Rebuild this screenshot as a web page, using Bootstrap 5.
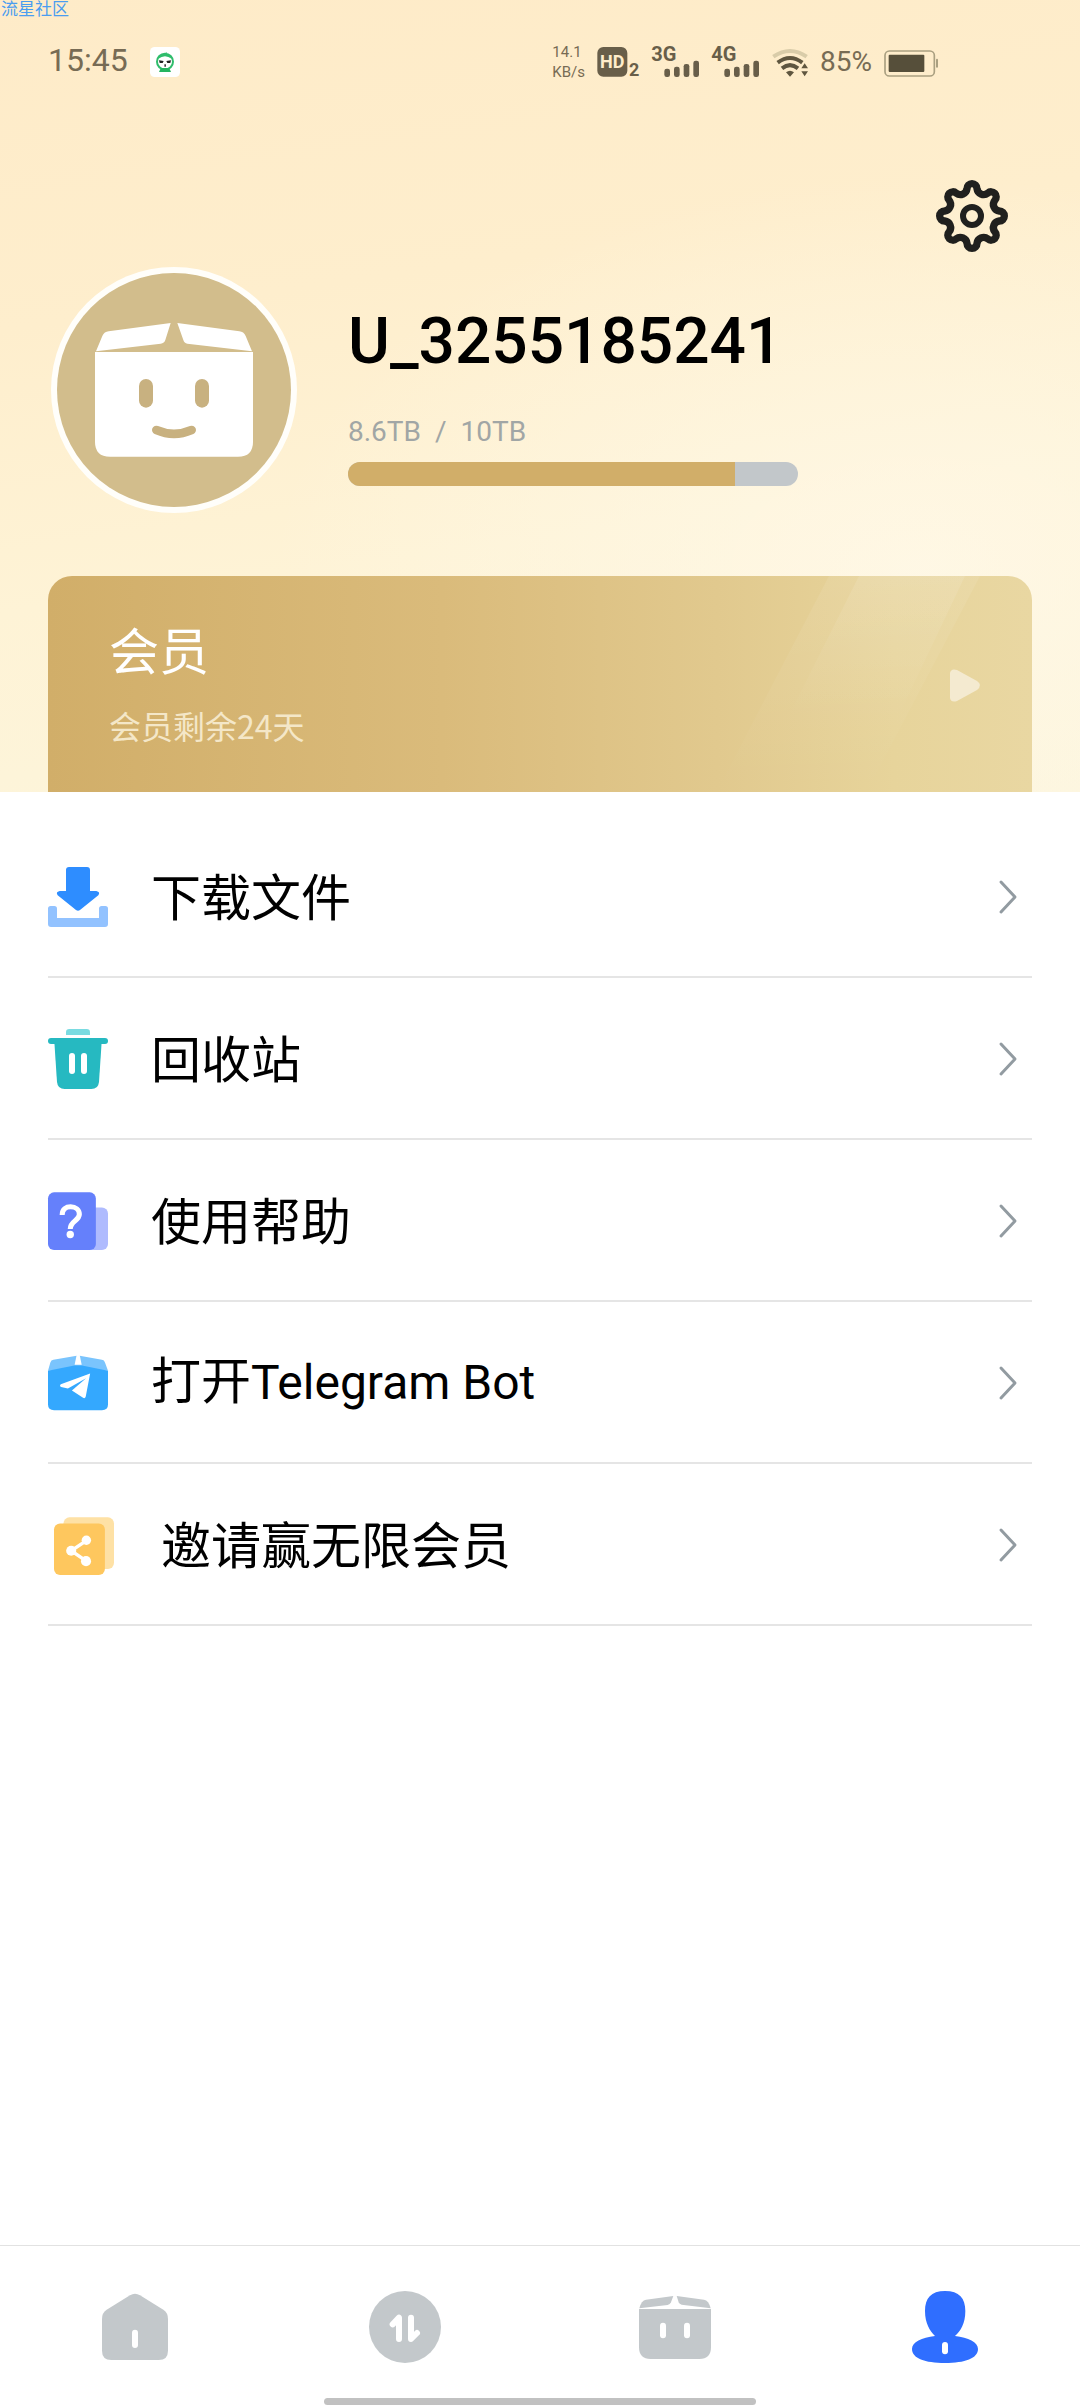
<!DOCTYPE html>
<html lang="zh-CN">
<head>
<meta charset="utf-8">
<meta name="viewport" content="width=device-width, initial-scale=1">
<title>我的</title>
<link href="https://cdn.jsdelivr.net/npm/bootstrap@5.3.0/dist/css/bootstrap.min.css" rel="stylesheet">
<style>
body{font-family:"Noto Sans CJK SC",sans-serif;color:#000;background:#fff}
svg{display:block;flex:none;overflow:visible}
.latin{font-family:Roboto,"Liberation Sans",sans-serif}
.watermark{top:0;left:1px;font-size:17px;line-height:16px;color:#4a9df0}
.hero{background:
  radial-gradient(ellipse 60% 50% at 85% 72%,rgba(255,249,234,.7),rgba(255,249,234,0)),
  linear-gradient(172deg,#feebc8 0,#feeecd 35%,#fef3d6 65%,#fcf5dc 100%)}
.statusbar{height:120px;padding:4px 142px 0 48px;color:#776b54}
.clock{font-size:32px;line-height:40px;margin-top:-4px}
.app-icon{margin-left:22px}
.speed{font-size:15px;line-height:20px}
.battery-text{font-size:28px;line-height:32px}
.status-gap{gap:12px}
.settings-row{padding:60px 72px 0}
.profile{gap:51px;padding:15px 51px 63px}
.profile-info{padding-top:6px}
.user-name{font-size:64px;line-height:84px;font-weight:500}
.quota{margin-top:28px;gap:14px;font-size:28px;line-height:40px;color:#a1a6a5}
.quota-bar{width:450px;max-width:100%;height:24px;margin-top:10px;border-radius:12px;background:#c2c7ca}
.quota-bar .progress-bar{background:#d1ae69}
.vip{min-height:216px;margin:0 48px;padding:42px 52px 0 61px;border-radius:24px 24px 0 0;background:linear-gradient(90deg,#d1ae69 0,#dabb7b 40%,#e1c98e 68%,#e7d49b 86%,#e9d7a2 100%)}
.vip-title{font-size:50px;line-height:60px}
.vip-sub{margin-top:25px;font-size:32px;line-height:44px;color:#f4e7c8}
.shine{top:0;right:0}
.vip-arrow{margin-top:51px}
.menu{padding:24px 48px 0}
.menu.list-group-flush > .menu-item.list-group-item{height:162px;padding:2px 15px 0 0;border:0;border-bottom:2px solid #e5e5e5;font-size:50px;line-height:60px;color:#000}
.menu-item{gap:43px}
.menu.list-group-flush > .menu-item.list-group-item.invite{gap:47px;padding-left:6px}
.menu-item > span{margin-top:-6px}
.menu-item .latin{font-size:48px}
.tabbar{border-top:1px solid #e2e2e2}
.tabbar .nav-link{padding:45px 0 35px}
.home-indicator{width:40%;height:7px;margin-bottom:3px;border-radius:4px;background:#c1c1c1}
</style>
<script src="https://cdn.jsdelivr.net/npm/bootstrap@5.3.0/dist/js/bootstrap.bundle.min.js"></script>
</head>
<body>
<div class="d-flex flex-column min-vh-100 position-relative">
  <div class="watermark position-absolute">流星社区</div>

  <header class="hero">
    <div class="statusbar latin d-flex align-items-center">
      <div class="clock">15:45</div>
      <svg class="app-icon" width="30" height="30" viewBox="450 138 90 90" aria-hidden="true">
        <rect x="450" y="138" width="90" height="90" rx="14" fill="#fff"/>
        <circle cx="495" cy="182" r="24" fill="#fff" stroke="#2fbd6c" stroke-width="6"/>
        <path d="M477 213Q479 203 487 201H503Q511 203 513 213Z" fill="#25b45f"/>
        <path d="M475 173Q495 158 515 173L506 159L497 160L502 153L490 159L480 163Z" fill="#2fbd6c"/>
        <path d="M477 178l14 2-3 6h-9zM513 178l-14 2 3 6h9z" fill="#222"/>
        <path d="M493 190h5v7h-5z" fill="#444"/>
      </svg>
      <div class="d-flex align-items-center status-gap ms-auto">
        <div class="speed"><div>14.1</div><div>KB/s</div></div>
        <svg width="43" height="32" viewBox="200 75 129 96" font-weight="700" fill="#685e49">
          <rect x="201" y="78" width="90" height="89" rx="18"/>
          <text x="209" y="142" font-size="54" fill="#feecca">HD</text>
          <text x="296" y="165" font-size="54">2</text>
        </svg>
        <svg width="48" height="32" viewBox="362 75 144 96" font-weight="700" fill="#685e49">
          <text x="360" y="121" font-size="60">3G</text>
          <rect x="399" y="143" width="17" height="25" rx="7"/><rect x="428" y="137" width="17" height="31" rx="7"/><rect x="457" y="129" width="17" height="39" rx="7"/><rect x="486" y="119" width="17" height="49" rx="7"/>
        </svg>
        <svg width="48" height="32" viewBox="542 75 144 96" font-weight="700" fill="#685e49">
          <text x="540" y="121" font-size="60">4G</text>
          <rect x="579" y="143" width="17" height="25" rx="7"/><rect x="608" y="137" width="17" height="31" rx="7"/><rect x="637" y="129" width="17" height="39" rx="7"/><rect x="666" y="119" width="17" height="49" rx="7"/>
        </svg>
        <svg width="36" height="32" viewBox="724 75 108 96" fill="none" stroke="#5f563f" stroke-width="12">
          <path d="M728 107Q778 73 828 107" stroke="#d9cca9"/>
          <path d="M741 125Q778 97 815 125"/>
          <path d="M754 142Q778 123 802 142"/>
          <path d="M766 154Q778 145 790 154L778 167Z" fill="#5f563f" stroke="none"/>
          <path d="M822 127l10 15h-20zM822 166l10-15h-20z" fill="#5f563f" stroke="none"/>
        </svg>
        <div class="battery-text">85%</div>
        <svg width="54" height="32" viewBox="1065 75 162 96">
          <rect x="1068" y="90" width="148" height="75" rx="13" fill="none" stroke="#aaa081" stroke-width="5"/>
          <rect x="1079" y="101" width="107" height="52" rx="3" fill="#564f3a"/>
          <rect x="1221" y="113" width="6" height="27" rx="3" fill="#aaa081"/>
        </svg>
      </div>
    </div>

    <div class="settings-row d-flex justify-content-end">
      <button type="button" class="btn p-0 border-0" aria-label="设置">
        <svg width="72" height="72" viewBox="-108 -108 216 216" fill="none" stroke="#20201e" stroke-width="22" stroke-linejoin="round">
          <path d="M-15-82A15 15 0 0 1 15-82A20 20 0 0 0 47.4-68.6A15 15 0 0 1 68.6-47.4A20 20 0 0 0 82-15A15 15 0 0 1 82 15A20 20 0 0 0 68.6 47.4A15 15 0 0 1 47.4 68.6A20 20 0 0 0 15 82A15 15 0 0 1-15 82A20 20 0 0 0-47.4 68.6A15 15 0 0 1-68.6 47.4A20 20 0 0 0-82 15A15 15 0 0 1-82-15A20 20 0 0 0-68.6-47.4A15 15 0 0 1-47.4-68.6A20 20 0 0 0-15-82Z"/>
          <circle r="27" stroke-width="18"/>
        </svg>
      </button>
    </div>

    <section class="profile d-flex align-items-center">
      <svg width="246" height="246" viewBox="33 51 738 738" role="img" aria-label="头像">
        <circle cx="402" cy="420" r="369" fill="#fffefa"/>
        <circle cx="402" cy="420" r="351" fill="#d2bd8c"/>
        <g fill="#fff">
          <path d="M165 306H639V575Q639 620 594 620H210Q165 620 165 575Z"/>
          <path d="M168 304L187 258Q193 245 206 244L392 219L376 270Q373 280 362 281Z"/>
          <path d="M636 304L617 258Q611 245 598 244L412 219L430 270Q433 280 442 281Z"/>
        </g>
        <rect x="297" y="387" width="42" height="86" rx="21" fill="#c8b180"/>
        <rect x="465" y="387" width="42" height="86" rx="21" fill="#c8b180"/>
        <path d="M349 540Q402 563 455 540" fill="none" stroke="#c8b180" stroke-width="26" stroke-linecap="round"/>
      </svg>
      <div class="profile-info latin flex-grow-1">
        <h1 class="user-name m-0">U_3255185241</h1>
        <div class="quota d-flex"><span>8.6TB</span><span>/</span><span>10TB</span></div>
        <div class="progress quota-bar" role="progressbar" aria-label="已用空间" aria-valuenow="86" aria-valuemin="0" aria-valuemax="100">
          <div class="progress-bar" style="width:86%"></div>
        </div>
      </div>
    </section>

    <a href="#vip" class="vip d-flex justify-content-between align-items-start position-relative overflow-hidden text-decoration-none text-white">
      <svg class="shine position-absolute" width="352" height="216" viewBox="0 48 1056 648" aria-hidden="true">
        <defs>
          <linearGradient id="g1" x1="0" y1="0" x2="0" y2="1"><stop offset="0" stop-color="#fff" stop-opacity=".08"/><stop offset="1" stop-color="#fff" stop-opacity="0"/></linearGradient>
          <linearGradient id="g2" x1="0" y1="0" x2="0" y2="1"><stop offset="0" stop-color="#fff" stop-opacity=".1"/><stop offset="1" stop-color="#fff" stop-opacity="0"/></linearGradient>
        </defs>
        <path d="M447 48H900L560 696H110Z" fill="url(#g1)"/>
        <path d="M537 48H855L650 480H320Z" fill="url(#g2)"/>
      </svg>
      <div>
        <div class="vip-title">会员</div>
        <div class="vip-sub">会员剩余24天</div>
      </div>
      <svg class="vip-arrow" width="30" height="33" viewBox="0 0 30 33"><path d="M0 4Q1-1 7 1L27 12Q33 16 27 21L7 32Q1 34 0 29Z" fill="#f4ead0"/></svg>
    </a>
  </header>

  <main class="menu list-group list-group-flush">
    <a href="#download" class="menu-item list-group-item d-flex align-items-center">
      <svg width="60" height="60" viewBox="54 81 180 180">
        <path d="M54 206Q54 198 62 198H73Q81 198 81 206V234H207V206Q207 198 215 198H226Q234 198 234 206V252Q234 261 225 261H63Q54 261 54 252Z" fill="#92c2ff"/>
        <path d="M108 90Q108 81 117 81H171Q180 81 180 90V153H199Q212 156 205 166L150 210Q144 215 138 210L83 166Q76 156 89 153H108Z" fill="#2e8dff"/>
      </svg>
      <span>下载文件</span>
      <svg class="ms-auto" width="18" height="34" viewBox="0 0 18 34"><path d="M2 2L16 17L2 32" fill="none" stroke="#929ba1" stroke-width="3" stroke-linecap="round" stroke-linejoin="round"/></svg>
    </a>
    <a href="#trash" class="menu-item list-group-item d-flex align-items-center">
      <svg width="60" height="60" viewBox="54 567 180 180">
        <path d="M108 585V577Q108 567 118 567H170Q180 567 180 577V585Z" fill="#7adbe1"/>
        <rect x="54" y="594" width="180" height="18" rx="9" fill="#26b9c1"/>
        <path d="M73 606H215L207 726Q205 747 184 747H104Q83 747 81 726Z" fill="#26b9c1"/>
        <rect x="117" y="639" width="18" height="63" rx="9" fill="#fff"/><rect x="153" y="639" width="18" height="63" rx="9" fill="#fff"/>
      </svg>
      <span>回收站</span>
      <svg class="ms-auto" width="18" height="34" viewBox="0 0 18 34"><path d="M2 2L16 17L2 32" fill="none" stroke="#929ba1" stroke-width="3" stroke-linecap="round" stroke-linejoin="round"/></svg>
    </a>
    <a href="#help" class="menu-item list-group-item d-flex align-items-center">
      <svg width="60" height="60" viewBox="53 92 178 178">
        <rect x="150" y="141" width="81" height="126" rx="18" fill="#afbbfe"/>
        <rect x="53" y="96" width="142" height="171" rx="18" fill="#6580fb"/>
        <path d="M95 163C95 146 107 139 120 139C135 139 146 148 146 161C146 181 119 180 119 205" fill="none" stroke="#fff" stroke-width="15"/>
        <circle cx="119" cy="221" r="11" fill="#fff"/>
      </svg>
      <span>使用帮助</span>
      <svg class="ms-auto" width="18" height="34" viewBox="0 0 18 34"><path d="M2 2L16 17L2 32" fill="none" stroke="#929ba1" stroke-width="3" stroke-linecap="round" stroke-linejoin="round"/></svg>
    </a>
    <a href="#telegram" class="menu-item list-group-item d-flex align-items-center">
      <svg width="60" height="60" viewBox="53 580 178 178">
        <path d="M53 633L60 608Q62 601 69 600L138 588L147 588L213 600Q220 601 222 608L231 633Z" fill="#7ac4fd"/>
        <path d="M53 633L131 617H154L231 633V733Q231 750 213 750H71Q53 750 53 733Z" fill="#34a8fe"/>
        <path d="M138 586H147L153 615H132Z" fill="#fff"/>
        <path d="M178 641L91 673Q86 678 92 681L112 685L166 655L124 691L157 713Q163 716 165 709Z" fill="#fff"/>
      </svg>
      <span>打开<span class="latin">Telegram Bot</span></span>
      <svg class="ms-auto" width="18" height="34" viewBox="0 0 18 34"><path d="M2 2L16 17L2 32" fill="none" stroke="#929ba1" stroke-width="3" stroke-linecap="round" stroke-linejoin="round"/></svg>
    </a>
    <a href="#invite" class="menu-item invite list-group-item d-flex align-items-center">
      <svg width="60" height="60" viewBox="71 1067 178 178">
        <rect x="99" y="1074" width="150" height="153" rx="18" fill="#fee1a5"/>
        <rect x="71" y="1092" width="151" height="153" rx="18" fill="#fec75e"/>
        <path d="M167 1143L122 1173L166 1203" fill="none" stroke="#fff" stroke-width="10"/>
        <circle cx="122" cy="1173" r="15" fill="#fff"/><circle cx="167" cy="1142" r="14" fill="#fff"/><circle cx="166" cy="1204" r="15" fill="#fff"/>
      </svg>
      <span>邀请赢无限会员</span>
      <svg class="ms-auto" width="18" height="34" viewBox="0 0 18 34"><path d="M2 2L16 17L2 32" fill="none" stroke="#929ba1" stroke-width="3" stroke-linecap="round" stroke-linejoin="round"/></svg>
    </a>
  </main>

  <footer class="tabbar mt-auto">
    <nav class="nav nav-justified">
      <a class="nav-link d-flex justify-content-center" href="#home" aria-label="首页">
        <svg width="72" height="72" viewBox="117 183 216 216">
          <path d="M126 267Q126 248 140 239L210 196Q225 187 240 196L310 239Q324 248 324 267V362Q324 390 296 390H154Q126 390 126 362Z" fill="#c3c8cb"/>
          <rect x="216" y="299" width="18" height="55" rx="9" fill="#fff"/>
        </svg>
      </a>
      <a class="nav-link d-flex justify-content-center" href="#transfer" aria-label="传输">
        <svg width="72" height="72" viewBox="927 183 216 216">
          <circle cx="1035" cy="291" r="108" fill="#c3c8cb"/>
          <path d="M998 283L1017 263V327M1053 263V327L1071 309" fill="none" stroke="#fff" stroke-width="18" stroke-linecap="round" stroke-linejoin="round"/>
        </svg>
      </a>
      <a class="nav-link d-flex justify-content-center" href="#box" aria-label="文件">
        <svg width="72" height="72" viewBox="117 183 216 216">
          <g fill="#c3c8cb">
            <path d="M117 237H333V352Q333 387 298 387H152Q117 387 117 352Z"/>
            <path d="M118 235Q124 211 138 209L220 198L213 217Q210 224 203 225Z"/>
            <path d="M332 235Q326 211 312 209L230 198L236 217Q238 223 245 224Z"/>
          </g>
          <rect x="180" y="278" width="18" height="47" rx="9" fill="#fff"/><rect x="252" y="278" width="18" height="47" rx="9" fill="#fff"/>
        </svg>
      </a>
      <a class="nav-link active d-flex justify-content-center" href="#me" aria-label="我的" aria-current="page">
        <svg width="72" height="72" viewBox="927 183 216 216">
          <path d="M1035 183C1078 183 1096 205 1096 243C1096 280 1082 303 1065 318C1105 322 1134 337 1134 357C1134 385 1095 399 1035 399C975 399 936 385 936 357C936 337 965 322 1005 318C990 303 975 280 975 243C975 205 993 183 1035 183Z" fill="#2f6eff"/>
          <rect x="1026" y="336" width="18" height="37" rx="9" fill="#fff"/>
        </svg>
      </a>
    </nav>
    <div class="home-indicator mx-auto"></div>
  </footer>
</div>
</body>
</html>
